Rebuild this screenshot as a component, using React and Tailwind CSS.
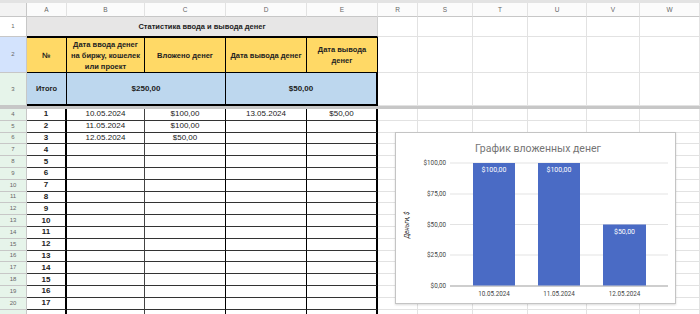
import React from "react";

const COLS = "grid grid-cols-[27px_40px_78px_81px_81px_71px_40px_55px_55px_59px_53px_60px]";
const LETTERS = ["A", "B", "C", "D", "E", "R", "S", "T", "U", "V", "W"];

function EmptyCells({ n = 6 }) {
  return Array.from({ length: n }).map((_, i) => (
    <div key={i} className="border-r border-b border-[#e2e2e2] bg-white" />
  ));
}

function RowHdr({ n, bg }) {
  return (
    <div className={`flex items-center justify-center border-r border-b border-[#c7c7c7] text-[6px] text-[#666] ${bg}`}>
      {n}
    </div>
  );
}

const data = {
  4: ["10.05.2024", "$100,00", "13.05.2024", "$50,00"],
  5: ["11.05.2024", "$100,00", "", ""],
  6: ["12.05.2024", "$50,00", "", ""],
};

function Chart() {
  const grid = [
    { y: 30, l: "$100,00" },
    { y: 61, l: "$75,00" },
    { y: 91.5, l: "$50,00" },
    { y: 122, l: "$25,00" },
    { y: 153, l: "$0,00" },
  ];
  const bars = [
    { x: 77, w: 42, top: 30, v: "$100,00", d: "10.05.2024" },
    { x: 142, w: 42, top: 30, v: "$100,00", d: "11.05.2024" },
    { x: 207, w: 43, top: 91.5, v: "$50,00", d: "12.05.2024" },
  ];
  return (
    <div className="absolute left-[395px] top-[132px] w-[281px] h-[172px] bg-white border border-[#c4c4c4] shadow-[0_1px_2px_rgba(0,0,0,0.15)]">
      <svg width="281" height="172" className="block" style={{ fontFamily: "Roboto, 'Liberation Sans', sans-serif" }}>
        <text x="142" y="19" textAnchor="middle" fontSize="10.5" fill="#757575">График вложенных денег</text>
        {grid.map((g, i) => (
          <g key={i}>
            <line x1="54" x2="272" y1={g.y} y2={g.y} stroke={i === 4 ? "#9e9e9e" : "#e3e3e3"} strokeWidth={i === 4 ? 1.2 : 1} />
            <text x="50" y={g.y + 2.3} textAnchor="end" fontSize="6.3" fill="#444">{g.l}</text>
          </g>
        ))}
        {bars.map((b, i) => (
          <g key={i}>
            <rect x={b.x} y={b.top} width={b.w} height={152.5 - b.top} fill="#4a6bc5" />
            <text x={b.x + b.w / 2} y={b.top + 9} textAnchor="middle" fontSize="7" fill="#fff">{b.v}</text>
            <text x={b.x + b.w / 2} y="163" textAnchor="middle" fontSize="6.3" fill="#444">{b.d}</text>
          </g>
        ))}
        <text x="0" y="0" transform="translate(13,92) rotate(-90)" textAnchor="middle" fontSize="6.3" fontStyle="italic" fill="#222">Деньги, $</text>
      </svg>
    </div>
  );
}

export default function App() {
  const rows = [];
  for (let r = 4; r <= 21; r++) {
    const d = data[r] || ["", "", "", ""];
    const last = r === 21;
    rows.push(
      <div key={r} className={`${COLS} h-[11.8px]`}>
        <RowHdr n={last ? "" : r} bg="bg-[#e6f4ea]" />
        <div className="flex items-center justify-center border-r-2 border-b border-r-black border-b-[#333] text-[8px] font-bold text-[#222] leading-none">{last ? "" : r - 3}</div>
        <div className="flex items-center justify-center border-r-[1.5px] border-b border-r-[#444] border-b-[#333] text-[8px] text-[#222] leading-none">{d[0]}</div>
        <div className="flex items-center justify-center border-r-[1.5px] border-b border-r-black border-b-[#333] text-[8px] text-[#222] leading-none">{d[1]}</div>
        <div className="flex items-center justify-center border-r border-b border-r-black border-b-[#333] text-[8px] text-[#222] leading-none">{d[2]}</div>
        <div className="flex items-center justify-center border-r-2 border-b border-r-black border-b-[#333] text-[8px] text-[#222] leading-none">{d[3]}</div>
        <EmptyCells />
      </div>
    );
  }

  const hdrCell = "flex items-center justify-center text-center leading-[11px] border-t border-b border-r-[1.5px] border-black bg-[#ffd966] text-[7.5px] font-bold text-[#222]";

  return (
    <div className="relative w-[700px] h-[314px] overflow-hidden bg-white" style={{ fontFamily: "'Liberation Sans', Arial, sans-serif" }}>
      <div className="h-[3px] bg-[#e3e3e3]" />
      {/* column letters */}
      <div className={`${COLS} h-[14px]`}>
        <div className="border-r border-b border-[#c7c7c7] bg-[#f3f3f3]" />
        {LETTERS.map((l) => (
          <div key={l} className="flex items-center justify-center border-r border-b border-r-[#e2e2e2] border-b-[#c7c7c7] bg-[#fbfbfb] text-[6.5px] text-[#666]">
            {l}
          </div>
        ))}
      </div>
      {/* row 1 */}
      <div className={`${COLS} h-[20px]`}>
        <RowHdr n={1} bg="bg-white" />
        <div className="col-span-5 flex items-center justify-center border-r border-b border-r-[#d0d0d0] border-b-black bg-[#e7e6e6] text-[7.5px] font-bold text-[#222]">
          Статистика ввода и вывода денег
        </div>
        <EmptyCells />
      </div>
      {/* row 2 */}
      <div className={`${COLS} h-[36px]`}>
        <RowHdr n={2} bg="bg-[#d3e3fd]" />
        <div className={hdrCell}>№</div>
        <div className={`${hdrCell} whitespace-nowrap text-[7.2px]`}>
          Дата ввода денег<br />на биржу, кошелек<br />или проект
        </div>
        <div className={hdrCell}>Вложено денег</div>
        <div className={`${hdrCell} whitespace-nowrap`}>Дата вывода денег</div>
        <div className={hdrCell}>
          Дата вывода<br />денег
        </div>
        <EmptyCells />
      </div>
      {/* row 3 */}
      <div className={`${COLS} h-[33px]`}>
        <RowHdr n={3} bg="bg-[#e6f4ea]" />
        <div className="flex items-center justify-center border-r-[1.5px] border-b-2 border-black bg-[#bdd7ee] text-[7.5px] font-bold text-[#222]">Итого</div>
        <div className="col-span-2 flex items-center justify-center border-r-[1.5px] border-b-2 border-black bg-[#bdd7ee] text-[8px] font-bold text-[#222]">$250,00</div>
        <div className="col-span-2 flex items-center justify-center border-r-2 border-b-2 border-black bg-[#bdd7ee] text-[8px] font-bold text-[#222]">$50,00</div>
        <EmptyCells />
      </div>
      <div className="h-[3px] bg-[#c7c7c7]" />
      {rows}
      <Chart />
    </div>
  );
}
